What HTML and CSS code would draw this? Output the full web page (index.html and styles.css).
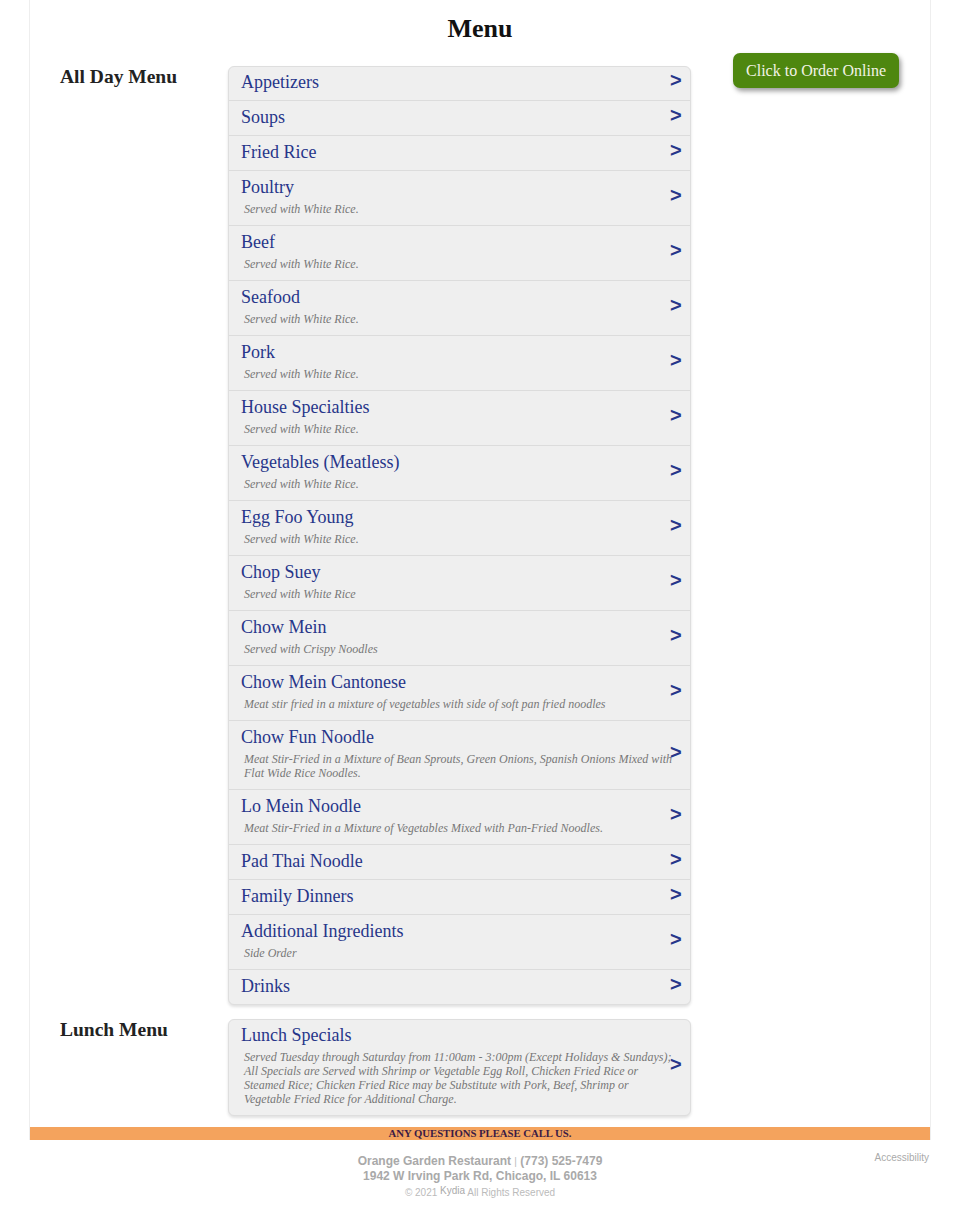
FILE: index.html
```html
<!DOCTYPE html>
<html>
<head>
<meta charset="utf-8">
<title>Menu</title>
<link rel="stylesheet" href="styles.css">
</head>
<body>
<div class="page">
  <h1 class="title">Menu</h1>
  <div class="section first">
    <h2 class="label">All Day Menu</h2>
    <div class="list">
      <div class="row"><div class="text"><div class="name">Appetizers</div></div><span class="arrow">&gt;</span></div>
      <div class="row"><div class="text"><div class="name">Soups</div></div><span class="arrow">&gt;</span></div>
      <div class="row"><div class="text"><div class="name">Fried Rice</div></div><span class="arrow">&gt;</span></div>
      <div class="row"><div class="text"><div class="name">Poultry</div><div class="desc">Served with White Rice.</div></div><span class="arrow">&gt;</span></div>
      <div class="row"><div class="text"><div class="name">Beef</div><div class="desc">Served with White Rice.</div></div><span class="arrow">&gt;</span></div>
      <div class="row"><div class="text"><div class="name">Seafood</div><div class="desc">Served with White Rice.</div></div><span class="arrow">&gt;</span></div>
      <div class="row"><div class="text"><div class="name">Pork</div><div class="desc">Served with White Rice.</div></div><span class="arrow">&gt;</span></div>
      <div class="row"><div class="text"><div class="name">House Specialties</div><div class="desc">Served with White Rice.</div></div><span class="arrow">&gt;</span></div>
      <div class="row"><div class="text"><div class="name">Vegetables (Meatless)</div><div class="desc">Served with White Rice.</div></div><span class="arrow">&gt;</span></div>
      <div class="row"><div class="text"><div class="name">Egg Foo Young</div><div class="desc">Served with White Rice.</div></div><span class="arrow">&gt;</span></div>
      <div class="row"><div class="text"><div class="name">Chop Suey</div><div class="desc">Served with White Rice</div></div><span class="arrow">&gt;</span></div>
      <div class="row"><div class="text"><div class="name">Chow Mein</div><div class="desc">Served with Crispy Noodles</div></div><span class="arrow">&gt;</span></div>
      <div class="row"><div class="text"><div class="name">Chow Mein Cantonese</div><div class="desc">Meat stir fried in a mixture of vegetables with side of soft pan fried noodles</div></div><span class="arrow">&gt;</span></div>
      <div class="row"><div class="text"><div class="name">Chow Fun Noodle</div><div class="desc">Meat Stir-Fried in a Mixture of Bean Sprouts, Green Onions, Spanish Onions Mixed with Flat Wide Rice Noodles.</div></div><span class="arrow">&gt;</span></div>
      <div class="row"><div class="text"><div class="name">Lo Mein Noodle</div><div class="desc">Meat Stir-Fried in a Mixture of Vegetables Mixed with Pan-Fried Noodles.</div></div><span class="arrow">&gt;</span></div>
      <div class="row"><div class="text"><div class="name">Pad Thai Noodle</div></div><span class="arrow">&gt;</span></div>
      <div class="row"><div class="text"><div class="name">Family Dinners</div></div><span class="arrow">&gt;</span></div>
      <div class="row"><div class="text"><div class="name">Additional Ingredients</div><div class="desc">Side Order</div></div><span class="arrow">&gt;</span></div>
      <div class="row"><div class="text"><div class="name">Drinks</div></div><span class="arrow">&gt;</span></div>
    </div>
    <div class="side"><a class="order" href="#">Click to Order Online</a></div>
  </div>
  <div class="section">
    <h2 class="label">Lunch Menu</h2>
    <div class="list">
      <div class="row"><div class="text"><div class="name">Lunch Specials</div><div class="desc">Served Tuesday through Saturday from 11:00am - 3:00pm (Except Holidays &amp; Sundays); All Specials are Served with Shrimp or Vegetable Egg Roll, Chicken Fried Rice or Steamed Rice; Chicken Fried Rice may be Substitute with Pork, Beef, Shrimp or Vegetable Fried Rice for Additional Charge.</div></div><span class="arrow">&gt;</span></div>
    </div>
    <div class="side"></div>
  </div>
  <div class="notice">ANY QUESTIONS PLEASE CALL US.</div>
</div>
<footer class="footer">
  <div class="info">
    <div class="line1">Orange Garden Restaurant <span class="sep">|</span> (773) 525-7479</div>
    <div class="line2">1942 W Irving Park Rd, Chicago, IL 60613</div>
    <div class="copy">© 2021 <sup class="brand">Kydia</sup> All Rights Reserved</div>
  </div>
  <a class="access" href="#">Accessibility</a>
</footer>
</body>
</html>
```

FILE: styles.css
```css
html, body {
  margin: 0;
  padding: 0;
  background: #fff;
}
body {
  font-family: "Liberation Serif", "Times New Roman", serif;
  color: #222;
}
.page {
  width: 900px;
  margin: 0 auto;
  border-left: 1px solid #eee;
  border-right: 1px solid #eee;
}
.title {
  margin: 0;
  padding-top: 14px;
  font-size: 26px;
  line-height: 30px;
  font-weight: bold;
  text-align: center;
  color: #111;
}
.section {
  display: grid;
  grid-template-columns: 168px 463px 166px;
  padding-left: 30px;
  margin-top: 14px;
}
.section.first {
  margin-top: 9px;
}
.section.first .label, .section.first .list {
  margin-top: 13px;
}
.label {
  margin: 0;
  font-size: 19.5px;
  line-height: 22px;
  font-weight: bold;
  color: #222;
}
.list {
  box-sizing: border-box;
  background: #efefef;
  border: 1px solid #dedede;
  border-radius: 6px;
  box-shadow: 0 2px 3px rgba(0,0,0,0.12);
  align-self: start;
}
.row {
  display: flex;
  align-items: center;
  padding: 6px 10px 7px 12px;
  border-bottom: 1px solid #dcdcdc;
}
.row:first-child {
  padding-top: 5px;
}
.row:last-child {
  border-bottom: none;
}
.text {
  width: 432px;
  flex: none;
}
.name {
  font-size: 18px;
  line-height: 21px;
  color: #27368a;
}
.desc {
  padding-left: 3px;
  margin: 4px 0 2px;
  font-size: 12px;
  line-height: 14px;
  font-style: italic;
  color: #777;
}
.arrow {
  font-family: "Liberation Sans", Arial, sans-serif;
  font-weight: bold;
  font-size: 20px;
  line-height: 20px;
  color: #27368a;
  margin-top: -6px;
  margin-left: -3px;
}
.side {
  padding-left: 42px;
}
.order {
  display: block;
  width: 166px;
  box-sizing: border-box;
  height: 35px;
  line-height: 35px;
  text-align: center;
  background: #4e870f;
  color: #f3f3e6;
  border-radius: 7px;
  font-size: 16px;
  text-decoration: none;
  box-shadow: 2px 3px 5px rgba(0,0,0,0.4);
}
.notice {
  margin-top: 11px;
  background: #f4a35d;
  height: 13px;
  line-height: 13px;
  text-align: center;
  font-size: 10.7px;
  font-weight: bold;
  color: #3b1b45;
}
.footer {
  position: relative;
  width: 900px;
  margin: 0 auto;
  padding-top: 14px;
  font-family: "Liberation Sans", Arial, sans-serif;
  text-align: center;
}
.line1, .line2 {
  font-size: 12px;
  line-height: 14px;
  font-weight: bold;
  color: #a9a9a9;
}
.sep {
  font-weight: normal;
  font-size: 10px;
  color: #bbb;
}
.copy {
  margin-top: 2px;
  font-size: 10px;
  line-height: 12px;
  color: #bbb;
}
.brand {
  font-size: 10px;
  vertical-align: 2px;
  color: #aaa;
}
.access {
  position: absolute;
  right: 1px;
  top: 12px;
  font-size: 10px;
  line-height: 12px;
  color: #aaa;
  text-decoration: none;
}
```
